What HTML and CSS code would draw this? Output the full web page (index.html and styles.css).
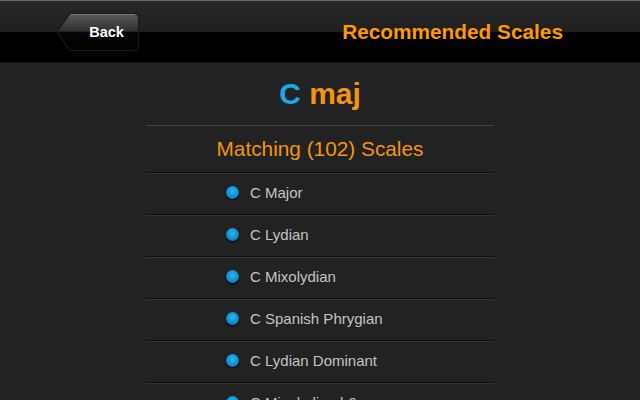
FILE: index.html
```html
<!DOCTYPE html>
<html>
<head>
  <meta charset="UTF-8">
  <title>Recommended Scales</title>
  <link rel="stylesheet" href="styles.css">
</head>
<body>
  <div class="header">
    <a class="back" href="#">
      <svg class="back-bg" width="84" height="40" viewBox="0 0 84 40">
        <defs>
          <linearGradient id="bg" x1="0" y1="0" x2="0" y2="1">
            <stop offset="0" stop-color="#5a5a5a"/>
            <stop offset="0.48" stop-color="#303030"/>
            <stop offset="0.5" stop-color="#050505"/>
            <stop offset="1" stop-color="#000"/>
          </linearGradient>
        </defs>
        <path d="M1 20 L14 1.5 H78 Q82.5 1.5 82.5 6 V34 Q82.5 38.5 78 38.5 H14 Z" fill="url(#bg)" stroke="#1a1a1a" stroke-width="1.2"/>
        <path d="M15 2.5 H78" stroke="#777" stroke-width="1"/>
      </svg>
      <span>Back</span>
    </a>
    <h1>Recommended Scales</h1>
  </div>
  <div class="content">
    <div class="chord"><span class="root">C</span> maj</div>
    <h2>Matching (102) Scales</h2>
    <ul class="scales">
      <li><i></i>C Major</li>
      <li><i></i>C Lydian</li>
      <li><i></i>C Mixolydian</li>
      <li><i></i>C Spanish Phrygian</li>
      <li><i></i>C Lydian Dominant</li>
      <li><i></i>C Mixolydian b6</li>
    </ul>
  </div>
</body>
</html>
```
FILE: styles.css
```css
* {padding: 0; margin: 0;}

html, body {
  height: 100%;
  overflow: hidden;
  background: #222;
  font-family: "Liberation Sans", Arial, sans-serif;
}
.header {
  height: 61px;
  border-top: 1px solid #6a6a6a;
  border-bottom: 1px solid #141414;
  background: linear-gradient(#282828, #1f1f1f 50%, #000 50%, #000);
  display: flex;
  align-items: center;
  justify-content: space-between;
  padding: 0 77px 0 56px;
  box-sizing: content-box;
}
.back {
  position: relative;
  width: 84px;
  height: 40px;
  display: flex;
  align-items: center;
  justify-content: center;
  padding-left: 17px;
  box-sizing: border-box;
  text-decoration: none;
}
.back .back-bg {
  position: absolute;
  top: 0;
  left: 0;
}
.back span {
  position: relative;
  color: #fff;
  font-weight: bold;
  font-size: 14.5px;
}
.header h1 {
  color: #ff9900;
  font-size: 20.8px;
  font-weight: bold;
}
.content {
  width: 348px;
  margin: 0 auto;
}
.chord {
  height: 62px;
  line-height: 62px;
  text-align: center;
  font-size: 30px;
  font-weight: bold;
  color: #f39418;
  border-bottom: 1px solid #444;
}
.chord .root {
  color: #1aa8ea;
}
.content h2 {
  height: 46px;
  line-height: 45px;
  text-align: center;
  font-size: 20.8px;
  font-weight: normal;
  color: #f39418;
  border-bottom: 1px solid #0e0e0e;
}
.scales {
  list-style: none;
}
.scales li {
  height: 42px;
  display: flex;
  align-items: center;
  padding-left: 80px;
  padding-bottom: 3px;
  box-sizing: border-box;
  gap: 11px;
  font-size: 15px;
  color: #c4c4c4;
  border-top: 1px solid #353535;
  border-bottom: 1px solid #0e0e0e;
}
.scales li i {
  width: 13px;
  height: 13px;
  border-radius: 50%;
  background: radial-gradient(circle at 50% 40%, #2ab8f0, #0d86c8 65%, #06609a);
  box-shadow: 0 1px 2px #000;
}
```
